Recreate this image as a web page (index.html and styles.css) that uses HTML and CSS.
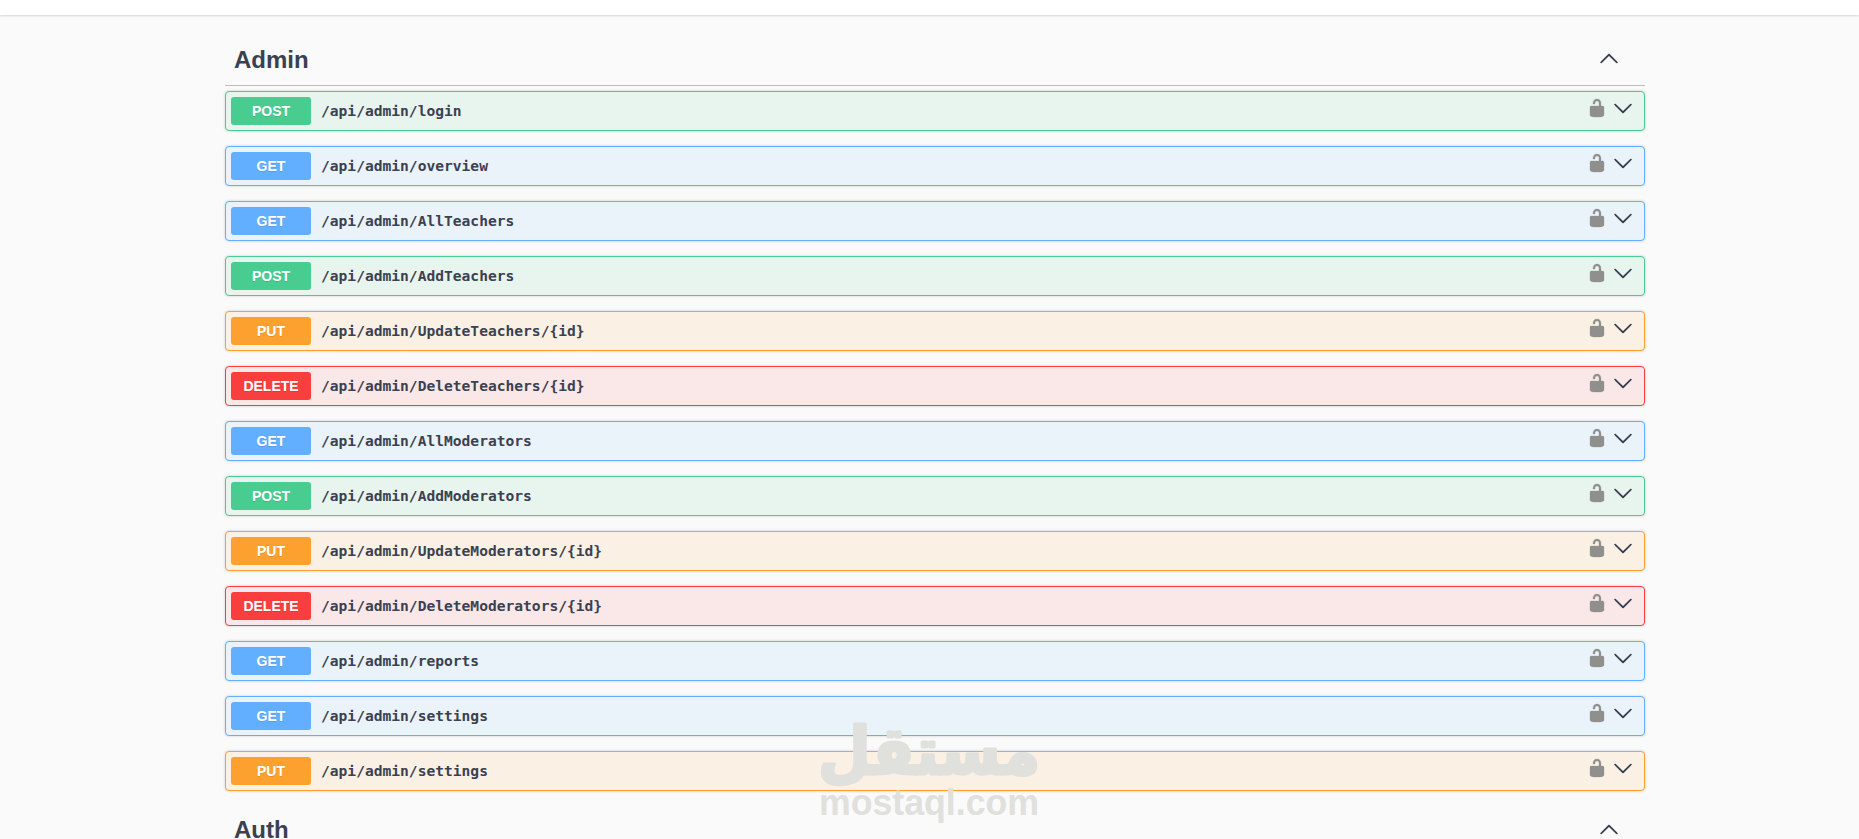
FILE: index.html
```
<!DOCTYPE html>
<html lang="en">
<head>
<meta charset="utf-8">
<title>API documentation</title>
<link rel="stylesheet" href="styles.css">
</head>
<body>
<svg class="defs" aria-hidden="true">
  <symbol id="up" viewBox="0 0 20 20"><path d="M17.418 14.908c.272.268.709.268.979 0s.271-.701 0-.969l-7.908-7.83c-.27-.268-.707-.268-.979 0l-7.908 7.83c-.27.268-.27.701 0 .969.271.268.709.268.979 0L10 7.767l7.418 7.141z"/></symbol>
  <symbol id="down" viewBox="0 0 20 20"><path d="M17.418 6.109c.272-.268.709-.268.979 0s.271.701 0 .969l-7.908 7.83c-.27.268-.707.268-.979 0l-7.908-7.83c-.27-.268-.27-.701 0-.969.271-.268.709-.268.979 0L10 13.25l7.418-7.141z"/></symbol>
  <symbol id="unlocked" viewBox="0 0 20 20"><path d="M15.8 8H14V5.6C14 2.703 12.665 1 10 1 7.334 1 6 2.703 6 5.6V6h2v-.801C8 3.754 8.797 3 10 3c1.203 0 2 .754 2 2.199V8H4c-.553 0-1 .646-1 1.199V17c0 .549.428 1.139.951 1.307l1.197.387C5.672 18.861 6.55 19 7.1 19h5.8c.549 0 1.428-.139 1.951-.307l1.196-.387c.524-.167.953-.757.953-1.306V9.199C17 8.646 16.352 8 15.8 8z"/></symbol>
</svg>
<div class="scheme"></div>
<main class="wrapper">
  <h3 class="tag"><span>Admin</span><svg class="icon"><use href="#up"/></svg></h3>
  <div class="ops">
    <div class="op post"><span class="method">POST</span><span class="path">/api/admin/login</span><svg class="icon lock"><use href="#unlocked"/></svg><svg class="icon"><use href="#down"/></svg></div>
    <div class="op get"><span class="method">GET</span><span class="path">/api/admin/overview</span><svg class="icon lock"><use href="#unlocked"/></svg><svg class="icon"><use href="#down"/></svg></div>
    <div class="op get"><span class="method">GET</span><span class="path">/api/admin/AllTeachers</span><svg class="icon lock"><use href="#unlocked"/></svg><svg class="icon"><use href="#down"/></svg></div>
    <div class="op post"><span class="method">POST</span><span class="path">/api/admin/AddTeachers</span><svg class="icon lock"><use href="#unlocked"/></svg><svg class="icon"><use href="#down"/></svg></div>
    <div class="op put"><span class="method">PUT</span><span class="path">/api/admin/UpdateTeachers/{id}</span><svg class="icon lock"><use href="#unlocked"/></svg><svg class="icon"><use href="#down"/></svg></div>
    <div class="op delete"><span class="method">DELETE</span><span class="path">/api/admin/DeleteTeachers/{id}</span><svg class="icon lock"><use href="#unlocked"/></svg><svg class="icon"><use href="#down"/></svg></div>
    <div class="op get"><span class="method">GET</span><span class="path">/api/admin/AllModerators</span><svg class="icon lock"><use href="#unlocked"/></svg><svg class="icon"><use href="#down"/></svg></div>
    <div class="op post"><span class="method">POST</span><span class="path">/api/admin/AddModerators</span><svg class="icon lock"><use href="#unlocked"/></svg><svg class="icon"><use href="#down"/></svg></div>
    <div class="op put"><span class="method">PUT</span><span class="path">/api/admin/UpdateModerators/{id}</span><svg class="icon lock"><use href="#unlocked"/></svg><svg class="icon"><use href="#down"/></svg></div>
    <div class="op delete"><span class="method">DELETE</span><span class="path">/api/admin/DeleteModerators/{id}</span><svg class="icon lock"><use href="#unlocked"/></svg><svg class="icon"><use href="#down"/></svg></div>
    <div class="op get"><span class="method">GET</span><span class="path">/api/admin/reports</span><svg class="icon lock"><use href="#unlocked"/></svg><svg class="icon"><use href="#down"/></svg></div>
    <div class="op get"><span class="method">GET</span><span class="path">/api/admin/settings</span><svg class="icon lock"><use href="#unlocked"/></svg><svg class="icon"><use href="#down"/></svg></div>
    <div class="op put"><span class="method">PUT</span><span class="path">/api/admin/settings</span><svg class="icon lock"><use href="#unlocked"/></svg><svg class="icon"><use href="#down"/></svg></div>
  </div>
  <h3 class="tag tag-next"><span>Auth</span><svg class="icon"><use href="#up"/></svg></h3>
</main>
<svg class="watermark" viewBox="0 0 240 119">
  <text class="wm-ar" transform="translate(128 54) scale(.98 1.07)" text-anchor="middle" direction="rtl">مستقل</text>
  <text class="wm-en" x="18" y="94.5" textLength="220" lengthAdjust="spacingAndGlyphs">mostaql.com</text>
</svg>
</body>
</html>
```
FILE: styles.css
```
* { box-sizing: border-box; }
body {
  margin: 0;
  height: 839px;
  overflow: hidden;
  position: relative;
  background: #fafafa;
  color: #3b4151;
  font-family: "Liberation Sans", Arial, sans-serif;
}
.defs { position: absolute; width: 0; height: 0; }
.scheme {
  height: 15px;
  background: #fff;
  box-shadow: 0 1px 2px rgba(0, 0, 0, .15);
}
.wrapper { width: 1420px; margin: 15px 0 0 225px; }
.tag {
  display: flex;
  align-items: center;
  justify-content: space-between;
  height: 56px;
  margin: 0 0 5px;
  padding: 0 26px 0 9px;
  border-bottom: 1px solid #bbbcbe;
  font-size: 24px;
  line-height: 28px;
}
.tag span { padding-top: 4px; }
.tag-next span { padding-top: 2px; }
.icon { flex: none; width: 20px; height: 20px; fill: #2f3548; stroke: #2f3548; stroke-width: .3px; }
.ops { display: grid; gap: 15px; margin-bottom: 10px; }
.op {
  display: flex;
  align-items: center;
  height: 40px;
  padding: 0 11px 0 5px;
  border: 1px solid;
  border-radius: 4px;
  box-shadow: 0 0 3px rgba(0, 0, 0, .19);
}
.method {
  width: 80px;
  height: 28px;
  border-radius: 3px;
  color: #fff;
  font-size: 14px;
  font-weight: 700;
  line-height: 29px;
  text-align: center;
  text-shadow: 0 1px 0 rgba(0, 0, 0, .1);
}
.path {
  flex: 1;
  padding-left: 10px;
  font: 700 14.6px/20px "DejaVu Sans Mono", monospace;
}
.op .icon { margin: 0 0 6px 6px; }
.op .lock { fill: #8f908e; stroke: #8f908e; }
.post { border-color: #49cc90; background: #e8f4ee; }
.post .method { background: #49cc90; }
.get { border-color: #61affe; background: #eaf2fa; }
.get .method { background: #61affe; }
.put { border-color: #fca130; background: #faf1e4; }
.put .method { background: #fca130; }
.delete { border-color: #f93e3e; background: #fae7e7; }
.delete .method { background: #f93e3e; }
.watermark {
  position: absolute;
  left: 801px;
  top: 720px;
  width: 240px;
  height: 119px;
  overflow: visible;
  fill: #e0e0dd;
  stroke: #e0e0dd;
  stroke-linejoin: round;
}
.wm-ar { font: 700 62px "DejaVu Sans", sans-serif; stroke-width: 3px; }
.wm-en { font: 700 36px "Liberation Sans", sans-serif; stroke: none; }
```
